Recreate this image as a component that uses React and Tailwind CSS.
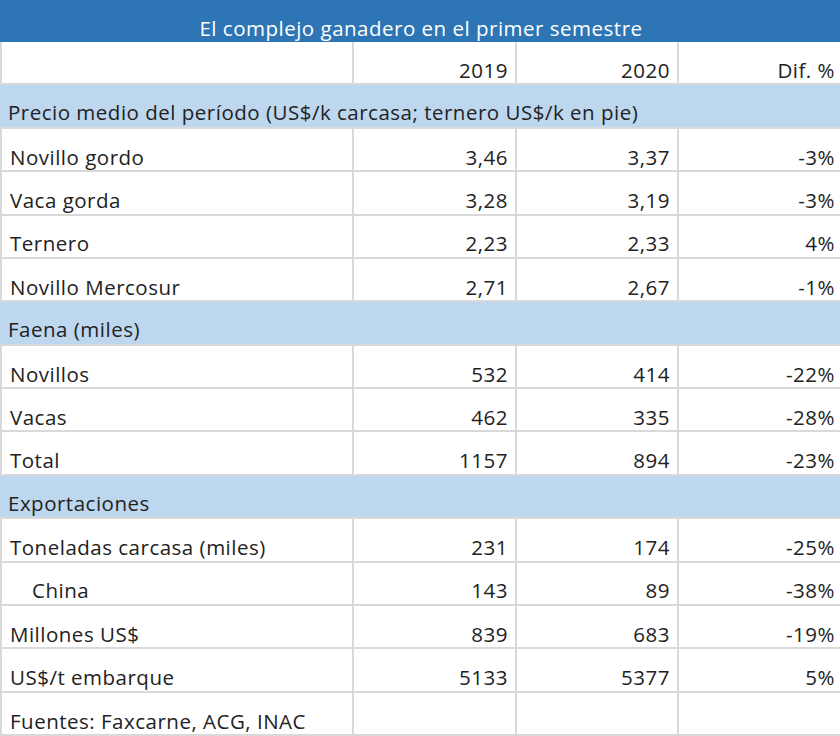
import React from 'react';

const rows = [
  { section: 'Precio medio del período (US$/k carcasa; ternero US$/k en pie)' },
  { label: 'Novillo gordo', a: '3,46', b: '3,37', d: '-3%' },
  { label: 'Vaca gorda', a: '3,28', b: '3,19', d: '-3%' },
  { label: 'Ternero', a: '2,23', b: '2,33', d: '4%' },
  { label: 'Novillo Mercosur', a: '2,71', b: '2,67', d: '-1%' },
  { section: 'Faena (miles)' },
  { label: 'Novillos', a: '532', b: '414', d: '-22%' },
  { label: 'Vacas', a: '462', b: '335', d: '-28%' },
  { label: 'Total', a: '1157', b: '894', d: '-23%' },
  { section: 'Exportaciones' },
  { label: 'Toneladas carcasa (miles)', a: '231', b: '174', d: '-25%' },
  { label: 'China', a: '143', b: '89', d: '-38%', indent: true },
  { label: 'Millones US$', a: '839', b: '683', d: '-19%' },
  { label: 'US$/t embarque', a: '5133', b: '5377', d: '5%' },
  { label: 'Fuentes: Faxcarne, ACG, INAC', a: '', b: '', d: '' },
];

function Row({ label, a, b, d, indent }) {
  return (
    <div className="grid grid-cols-[354px_163px_162px_1fr] h-[43.375px] border-b-2 border-[#d9d9d9]">
      <div className={`flex items-end pb-[3px] border-r-2 border-l-2 border-[#d9d9d9] ${indent ? 'pl-[30px]' : 'pl-[8px]'}`}>{label}</div>
      <div className="flex items-end justify-end pb-[3px] pr-[7px] border-r-2 border-[#d9d9d9]">{a}</div>
      <div className="flex items-end justify-end pb-[3px] pr-[7px] border-r-2 border-[#d9d9d9]">{b}</div>
      <div className="flex items-end justify-end pb-[3px] pr-[5px]">{d}</div>
    </div>
  );
}

export default function App() {
  return (
    <div
      className="w-[840px] h-[736px] overflow-hidden bg-white text-[#222222] text-[20.5px] tracking-[0.5px] leading-none"
      style={{ fontFamily: '"Open Sans", "Liberation Sans", sans-serif' }}
    >
      <div className="h-[42px] bg-[#2e75b6] text-white flex items-end justify-center pb-[4px] pl-[2px]">
        El complejo ganadero en el primer semestre
      </div>
      <Row label="" a="2019" b="2020" d="Dif. %" />
      {rows.map((r, i) =>
        r.section ? (
          <div key={i} className="h-[43.375px] bg-[#bdd7ee] flex items-end pl-[8px] pb-[4px] border-b-2 border-[#d9d9d9]">
            {r.section}
          </div>
        ) : (
          <Row key={i} {...r} />
        )
      )}
    </div>
  );
}
